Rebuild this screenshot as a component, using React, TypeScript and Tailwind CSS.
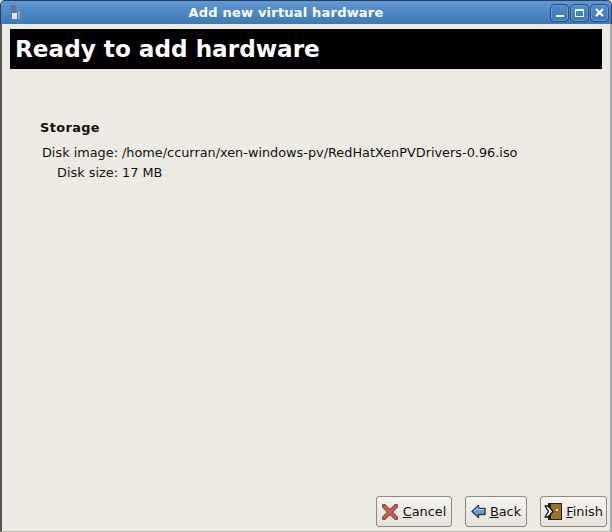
const font = "font-['DejaVu_Sans',sans-serif]";

const WindowButton = ({ children }: { children: React.ReactNode }) => (
  <div className="w-[19px] h-[18px] rounded-[4px] border border-[#264f84] bg-gradient-to-b from-[#4f8aca] to-[#3f78b8] shadow-[inset_0_0_0_1px_#6a9ad0] flex items-center justify-center">
    {children}
  </div>
);

const DialogButton = ({
  width,
  gap,
  icon,
  mnemonic,
  rest,
}: {
  width: string;
  gap: string;
  icon: React.ReactNode;
  mnemonic: string;
  rest: string;
}) => (
  <div
    className={`${width} ${gap} h-[31px] flex items-center justify-center rounded-[3px] border border-[#8f8a82] bg-gradient-to-b from-[#f6f4f1] to-[#e6e2dc] text-[12.85px] text-[#111]`}
  >
    {icon}
    <span>
      <span className="underline">{mnemonic}</span>
      {rest}
    </span>
  </div>
);

const CancelIcon = () => (
  <svg width="16" height="16" viewBox="0 0 16 16">
    <path d="M2 2 L14 14 M14 2 L2 14" stroke="#7d4238" strokeWidth="4.4" strokeLinecap="round" />
    <path d="M2.2 2.2 L13.8 13.8 M13.8 2.2 L2.2 13.8" stroke="#d0604c" strokeWidth="2.4" strokeLinecap="round" />
  </svg>
);

const BackIcon = () => (
  <svg width="15" height="15" viewBox="0 0 15 15">
    <path d="M1 7.5 L7.5 1.5 V4.5 H14 V10.5 H7.5 V13.5 Z" fill="#6f9cc6" stroke="#24405e" strokeWidth="1.4" strokeLinejoin="round" />
    <path d="M3 7 L7 3.5 V5.5 H13" fill="none" stroke="#b8d2ea" strokeWidth="1" />
  </svg>
);

const FinishIcon = () => (
  <svg width="18" height="17" viewBox="0 0 18 17">
    <rect x="4" y="0" width="14" height="17" fill="#2c210f" />
    <rect x="7" y="1" width="10" height="15" fill="#9a6f2f" />
    <rect x="12" y="6" width="2" height="2" fill="#f3e2a8" />
    <path d="M1 3 H4 L9 8.5 L4 14 H1 L4.5 8.5 Z" fill="#fff" stroke="#111" strokeWidth="1.3" strokeLinejoin="round" />
  </svg>
);

export default function App() {
  return (
    <div className={`${font} w-[612px] h-[532px] flex flex-col bg-[#edeae4] overflow-hidden`}>
      <div className="h-[24px] shrink-0 rounded-t-[5px] border-t border-x border-[#2b3f5c] border-b-[#2f5a90] bg-gradient-to-b from-[#6298d2] to-[#3d78b8] flex items-center pl-[7px] pr-[2px]">
        <svg width="14" height="15" viewBox="0 0 14 15">
          <rect x="3" y="0" width="5" height="14" fill="#5f7799" />
          <rect x="4" y="8" width="5" height="6" fill="#dfe4ea" />
          <rect x="10" y="6" width="2" height="8" fill="#8fa8c8" />
        </svg>
        <div className="flex-1 text-center text-[13px] leading-none font-bold text-white tracking-[0.2px]">
          Add new virtual hardware
        </div>
        <div className="flex gap-[1px]">
          <WindowButton>
            <div className="w-[8px] h-[2px] mt-[6px] bg-white" />
          </WindowButton>
          <WindowButton>
            <div className="w-[9px] h-[8px] border border-white border-t-2" />
          </WindowButton>
          <WindowButton>
            <svg width="9" height="9" viewBox="0 0 9 9">
              <path d="M1 1 L8 8 M8 1 L1 8" stroke="#fff" strokeWidth="2.2" />
            </svg>
          </WindowButton>
        </div>
      </div>

      <div className="flex-1 flex flex-col border-x-2 border-l-[#555] border-r-[#aaa] border-b border-b-[#bdb9b2]">
        <div className="mt-[5px] mx-[8px] h-[40px] bg-black text-white text-[23.15px] font-bold pl-[5px] flex items-center">
          Ready to add hardware
        </div>

        <div className="flex-1 pl-[38px] pt-[50px] text-[12.85px] text-[#111]">
          <div className="font-bold leading-[17px] tracking-[0.4px]">Storage</div>
          <div className="mt-[8px] grid grid-cols-[78px_auto] justify-start gap-x-[4px] gap-y-[3px] leading-[17px]">
            <div className="text-right">Disk image:</div>
            <div>/home/ccurran/xen-windows-pv/RedHatXenPVDrivers-0.96.iso</div>
            <div className="text-right">Disk size:</div>
            <div>17 MB</div>
          </div>
        </div>

        <div className="flex justify-end gap-[13px] pr-[3px] pb-[4px]">
          <DialogButton width="w-[76px]" gap="gap-[5px]" icon={<CancelIcon />} mnemonic="C" rest="ancel" />
          <DialogButton width="w-[62px]" gap="gap-[4px]" icon={<BackIcon />} mnemonic="B" rest="ack" />
          <DialogButton width="w-[67px]" gap="gap-[4px]" icon={<FinishIcon />} mnemonic="F" rest="inish" />
        </div>
      </div>
    </div>
  );
}
